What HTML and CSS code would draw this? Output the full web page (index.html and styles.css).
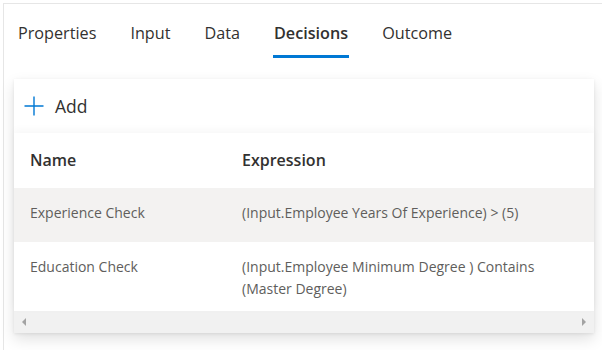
FILE: index.html
```html
<!DOCTYPE html>
<html lang="en">
<head>
  <meta charset="UTF-8" />
  <meta name="viewport" content="width=device-width, initial-scale=1.0"/>
  <title>Decisions</title>
  <link rel="stylesheet" href="styles.css">
</head>
<body>

  <div class="panel">
    <!-- Tabs -->
    <div class="tabs">
      <span class="tab">Properties</span>
      <span class="tab">Input</span>
      <span class="tab">Data</span>
      <span class="tab active">Decisions</span>
      <span class="tab">Outcome</span>
    </div>

    <div class="card">
      <div class="command-bar">
        <button class="add-btn">
          <svg width="20" height="20" viewBox="0 0 20 20">
            <path d="M10 0.5 V19.5 M0.5 10 H19.5" stroke="#0078d4" stroke-width="1.4" fill="none"/>
          </svg>
          <span>Add</span>
        </button>
      </div>

      <div class="list">
        <div class="row header">
          <div class="cell">Name</div>
          <div class="cell">Expression</div>
        </div>
        <div class="row selected">
          <div class="cell">Experience Check</div>
          <div class="cell">(Input.Employee Years Of Experience) &gt; (5)</div>
        </div>
        <div class="row">
          <div class="cell">Education Check</div>
          <div class="cell">(Input.Employee Minimum Degree ) Contains (Master Degree)</div>
        </div>
      </div>

      <!-- horizontal scrollbar -->
      <div class="scrollbar">
        <span class="arrow left"></span>
        <span class="arrow right"></span>
      </div>
    </div>
  </div>

</body>
</html>
```

FILE: styles.css
```css
body {
  margin: 0;
  background: #fff;
  font-family: "Open Sans", "Noto Sans", sans-serif;
  color: #323130;
}
.panel {
  margin: 3px 0 0 3px;
  height: 347px;
  border-top: 1px solid #e6e6e6;
  border-left: 1px solid #e6e6e6;
  box-sizing: border-box;
}
.tabs {
  display: flex;
  gap: 34px;
  padding: 17px 0 0 14px;
  height: 41px;
}
.tab {
  font-size: 16.2px;
  line-height: 24px;
  color: #323130;
  height: 37px;
  box-sizing: border-box;
}
.tab.active {
  font-weight: 600;
  border-bottom: 3px solid #0078d4;
  padding: 0 1px;
  margin: 0 -1px;
}
.card {
  margin: 17px 0 0 10px;
  width: 580px;
  background: #fff;
  box-shadow: 0 6px 14px rgba(0, 0, 0, 0.12), 0 1px 3px rgba(0, 0, 0, 0.08);
}
.command-bar {
  height: 54px;
  display: flex;
  align-items: center;
  padding-left: 10px;
}
.add-btn {
  display: flex;
  align-items: center;
  gap: 11px;
  background: none;
  border: none;
  padding: 0;
  font-family: inherit;
  font-size: 17.5px;
  color: #323130;
  cursor: pointer;
}
.list {
  position: relative;
  box-shadow: 0 -3px 8px rgba(0, 0, 0, 0.035);
}
.row {
  display: grid;
  grid-template-columns: 212px 340px;
  min-height: 54px;
  align-items: start;
  font-size: 14px;
  color: #605e5c;
}
.row .cell {
  padding: 14px 0 11px 16px;
  line-height: 22px;
}
.row.header {
  min-height: 55px;
  font-size: 16px;
  font-weight: 600;
  color: #323130;
}
.row.header .cell {
  padding-top: 16px;
}
.row.selected {
  background: #f3f2f1;
}
.scrollbar {
  height: 22px;
  background: #f1f1f1;
  display: flex;
  justify-content: space-between;
  align-items: center;
  padding: 0 8px;
}
.arrow {
  width: 0;
  height: 0;
  border-top: 4px solid transparent;
  border-bottom: 4px solid transparent;
}
.arrow.left {
  border-right: 4px solid #a3a3a3;
}
.arrow.right {
  border-left: 4px solid #a3a3a3;
}
```
